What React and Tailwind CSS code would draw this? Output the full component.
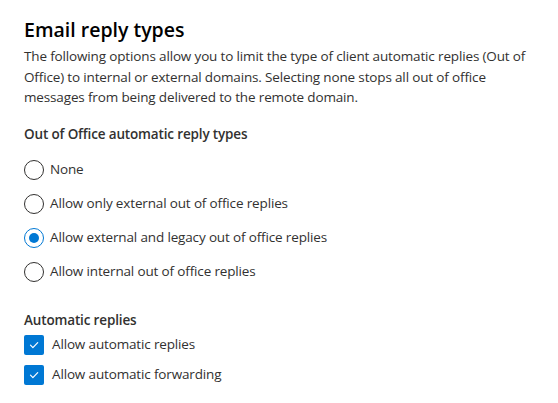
// Email reply types — Exchange-style settings panel with radio options and checkboxes

import { useState } from "react";

const font = { fontFamily: '"Open Sans", "Noto Sans", sans-serif' };

const replyTypes = [
  { id: "none", label: "None" },
  { id: "external", label: "Allow only external out of office replies" },
  { id: "legacy", label: "Allow external and legacy out of office replies" },
  { id: "internal", label: "Allow internal out of office replies" },
];

function Radio({ checked, label, onSelect }) {
  return (
    <label className="flex items-center h-[34px] cursor-pointer" onClick={onSelect}>
      <span
        className={`w-5 h-5 rounded-full border flex items-center justify-center ${
          checked ? "border-[#0078d4]" : "border-[#323130]"
        }`}
      >
        {checked && <span className="w-[10px] h-[10px] rounded-full bg-[#0078d4]" />}
      </span>
      <span className="ml-[6px] text-[13.5px] tracking-[-0.15px] text-[#323130]">{label}</span>
    </label>
  );
}

function Checkbox({ checked, label, onToggle }) {
  return (
    <label className="flex items-center h-[30px] cursor-pointer" onClick={onToggle}>
      <span
        className={`w-5 h-5 rounded-[2px] flex items-center justify-center ${
          checked ? "bg-[#0078d4]" : "border border-[#323130]"
        }`}
      >
        {checked && (
          <svg width="12" height="12" viewBox="0 0 12 12" fill="none">
            <path d="M2.5 6.2l2.4 2.4 4.8-5" stroke="white" strokeWidth="1.2" strokeLinecap="round" strokeLinejoin="round" />
          </svg>
        )}
      </span>
      <span className="ml-2 text-[13.5px] tracking-[-0.15px] text-[#323130]">{label}</span>
    </label>
  );
}

export default function App() {
  const [reply, setReply] = useState("legacy");
  const [autoReplies, setAutoReplies] = useState(true);
  const [autoForward, setAutoForward] = useState(true);

  return (
    <div className="w-[558px] h-[403px] bg-white pl-6 pr-3 pt-4" style={font}>
      <h2 className="text-[19.5px] font-semibold leading-[28px] text-black">Email reply types</h2>
      <p className="mt-[2px] text-[13.5px] tracking-[-0.15px] leading-[20.5px] text-[#323130]">
        The following options allow you to limit the type of client automatic replies (Out of Office) to internal or
        external domains. Selecting none stops all out of office messages from being delivered to the remote domain.
      </p>

      <h3 className="mt-[16px] text-[13.5px] font-semibold tracking-[-0.15px] leading-[20px] text-[#323130]">
        Out of Office automatic reply types
      </h3>
      <div className="mt-[9px] flex flex-col">
        {replyTypes.map((t) => (
          <Radio key={t.id} label={t.label} checked={reply === t.id} onSelect={() => setReply(t.id)} />
        ))}
      </div>

      <h3 className="mt-[21px] text-[13.5px] font-semibold tracking-[-0.15px] leading-[20px] text-[#323130]">
        Automatic replies
      </h3>
      <div className="flex flex-col">
        <Checkbox label="Allow automatic replies" checked={autoReplies} onToggle={() => setAutoReplies(!autoReplies)} />
        <Checkbox label="Allow automatic forwarding" checked={autoForward} onToggle={() => setAutoForward(!autoForward)} />
      </div>
    </div>
  );
}
